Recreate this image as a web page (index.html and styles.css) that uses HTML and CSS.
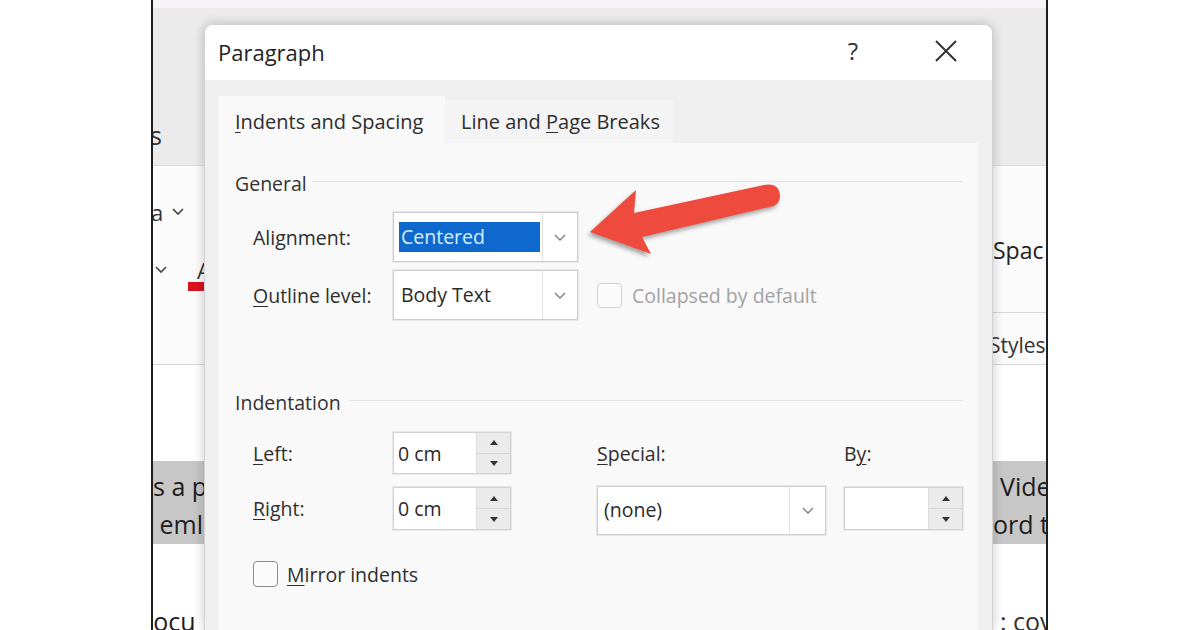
FILE: index.html
```html
<!DOCTYPE html>
<html lang="en">
<head>
<meta charset="utf-8">
<title>Paragraph</title>
<link rel="stylesheet" href="styles.css">
</head>
<body>
<div class="screen">
  <div class="top-strip"></div>
  <div class="ribbon-tabs"><span class="frag frag-s">s</span></div>
  <div class="ribbon">
    <div class="rib-left">
      <div class="rib-row rib-row1"><span class="frag">a</span><svg class="mini-chev" width="12" height="8" viewBox="0 0 12 8"><polyline points="1,1 6,6 11,1"/></svg></div>
      <div class="rib-row rib-row2"><svg class="mini-chev" width="12" height="8" viewBox="0 0 12 8"><polyline points="1,1 6,6 11,1"/></svg><span class="font-color"><span class="font-a">A</span><span class="red-bar"></span></span></div>
    </div>
    <div class="rib-right">
      <div class="rib-block1"><span class="frag frag-spac">Spac</span></div>
      <div class="rib-block2"><span class="frag frag-styles">Styles</span></div>
    </div>
  </div>
  <div class="doc">
    <div class="doc-band">
      <div class="doc-line"><span class="frag">s a p</span><span class="frag">Vide</span></div>
      <div class="doc-line"><span class="frag">&nbsp;eml</span><span class="frag frag-ord">ord t</span></div>
    </div>
    <div class="doc-line doc-last"><span class="frag frag-locu">locu</span><span class="frag frag-cov">: cov</span></div>
  </div>
</div>

<div class="dialog">
  <div class="titlebar">
    <span class="title">Paragraph</span>
    <span class="help">?</span>
    <span class="close"><svg width="24" height="24" viewBox="0 0 24 24"><path d="M2 2 L22 22 M22 2 L2 22"/></svg></span>
  </div>
  <div class="dlg-body">
    <div class="tabs">
      <div class="tab tab-active"><u>I</u>ndents and Spacing</div>
      <div class="tab tab-inactive">Line and <u>P</u>age Breaks</div>
    </div>
    <div class="panel">
      <div class="group-head"><span>General</span><span class="rule"></span></div>
      <div class="rows">
        <div class="row">
          <span class="label">Ali<u>g</u>nment:</span>
          <div class="combo">
            <div class="combo-value"><span class="selected">Centered</span></div>
            <div class="combo-btn"><svg width="12" height="7" viewBox="0 0 12 7"><polyline points="1,1 6,6 11,1"/></svg></div>
          </div>
        </div>
        <div class="row row-gap">
          <span class="label"><u>O</u>utline level:</span>
          <div class="combo">
            <div class="combo-value plain">Body Text</div>
            <div class="combo-btn"><svg width="12" height="7" viewBox="0 0 12 7"><polyline points="1,1 6,6 11,1"/></svg></div>
          </div>
          <span class="check check-disabled"></span>
          <span class="check-label disabled">Collapsed by default</span>
        </div>
      </div>

      <div class="group-head group-indent"><span>Indentation</span><span class="rule"></span></div>
      <div class="indent-grid">
        <span class="label c1"><u>L</u>eft:</span>
        <div class="spin c2">
          <div class="spin-value">0 cm</div>
          <div class="spin-btns"><span class="up"></span><span class="down"></span></div>
        </div>
        <span class="label c4"><u>S</u>pecial:</span>
        <span class="label c6">B<u>y</u>:</span>

        <span class="label c1"><u>R</u>ight:</span>
        <div class="spin c2">
          <div class="spin-value">0 cm</div>
          <div class="spin-btns"><span class="up"></span><span class="down"></span></div>
        </div>
        <div class="combo combo-special c4">
          <div class="combo-value plain">(none)</div>
          <div class="combo-btn"><svg width="12" height="7" viewBox="0 0 12 7"><polyline points="1,1 6,6 11,1"/></svg></div>
        </div>
        <div class="spin c6">
          <div class="spin-value"></div>
          <div class="spin-btns"><span class="up"></span><span class="down"></span></div>
        </div>
      </div>

      <div class="mirror-row">
        <span class="check"></span>
        <span class="check-label"><u>M</u>irror indents</span>
      </div>
    </div>
  </div>
</div>

<svg class="arrow" width="230" height="100" viewBox="570 170 230 100">
  <path d="M590 232 L636 190 L634 213 L764 185 Q779 182 780 195 Q780 206 769 207 L642 237 L651 254 Z"/>
</svg>
</body>
</html>
```
FILE: styles.css
```css
html, body {
  margin: 0;
  padding: 0;
}
body {
  width: 1200px;
  height: 630px;
  overflow: hidden;
  background: #ffffff;
  font-family: "Open Sans", "Noto Sans", sans-serif;
  color: #2e2e2e;
  position: relative;
}

/* ---------- background Word window ---------- */
.screen {
  margin-left: 151px;
  width: 893px;
  height: 630px;
  border-left: 2px solid #1f1f1f;
  border-right: 2px solid #1f1f1f;
  overflow: hidden;
  background: #ffffff;
}
.top-strip {
  height: 8px;
  background: #f6f4f8;
}
.ribbon-tabs {
  height: 157px;
  background: #ebebeb;
  box-sizing: border-box;
  padding-top: 108px;
  font-size: 25px;
  line-height: 38px;
  color: #333;
}
.frag {
  white-space: nowrap;
}
.frag-s {
  margin-left: -3px;
}
.ribbon {
  height: 200px;
  box-sizing: border-box;
  border-top: 1px solid #dcdcdc;
  border-bottom: 1px solid #d6d6d6;
  background: #fbfbfb;
  display: flex;
  justify-content: space-between;
}
.rib-left {
  width: 51px;
  padding-top: 31px;
}
.rib-row {
  height: 30px;
  display: flex;
  align-items: center;
  font-size: 22px;
  color: #333;
}
.rib-row1 .frag {
  margin-left: -2px;
}
.rib-row1 .mini-chev {
  margin-left: 9px;
}
.rib-row2 {
  margin-top: 28px;
}
.rib-row2 .mini-chev {
  margin-left: 2px;
}
.mini-chev {
  flex: none;
}
.mini-chev polyline {
  fill: none;
  stroke: #444;
  stroke-width: 1.6;
}
.font-color {
  flex: none;
  display: flex;
  flex-direction: column;
  margin-left: 21px;
  margin-top: 10px;
}
.font-a {
  font-size: 22px;
  line-height: 22px;
  color: #333;
  margin-left: 9px;
}
.red-bar {
  width: 17px;
  height: 9px;
  background: #d9121e;
  margin-top: 1px;
}
.rib-right {
  width: 53px;
  display: flex;
  flex-direction: column;
}
.rib-block1 {
  height: 147px;
  box-sizing: border-box;
  padding-top: 69px;
  border-bottom: 1px solid #d8d8d8;
  font-size: 23px;
  line-height: 30px;
  color: #222;
}
.rib-block2 {
  padding-top: 17px;
  font-size: 21px;
  line-height: 30px;
  color: #333;
}
.frag-styles {
  margin-left: -4px;
}
.doc {
  padding-top: 96px;
  font-size: 25px;
  color: #1d1d1d;
}
.doc-band {
  background: #c7c7c7;
  padding: 6px 0 1px;
}
.doc-line {
  height: 38px;
  line-height: 38px;
  display: flex;
  justify-content: space-between;
}
.doc-line .frag:last-child {
  width: 46px;
  overflow: hidden;
}
.doc-band .doc-line:nth-child(2) .frag:last-child {
  width: 53px;
}
.doc-last {
  margin-top: 58px;
}
.frag-locu {
  margin-left: -6px;
}
.doc-last .frag-cov {
  width: 46px;
  color: #333;
}

/* ---------- dialog ---------- */
.dialog {
  position: absolute;
  left: 204px;
  top: 24px;
  width: 789px;
  height: 606px;
  box-sizing: border-box;
  background: #efefef;
  border: 1px solid #d2d2d2;
  border-bottom: none;
  border-radius: 9px 9px 0 0;
  box-shadow: 0 0 12px rgba(0, 0, 0, 0.22);
  overflow: hidden;
}
.titlebar {
  height: 55px;
  background: #ffffff;
  display: flex;
  align-items: center;
  padding-left: 13px;
}
.title {
  font-size: 22px;
  color: #242424;
  margin-top: -2px;
}
.help {
  margin-left: auto;
  width: 40px;
  text-align: center;
  font-size: 24px;
  color: #333;
  margin-top: -4px;
}
.close {
  width: 48px;
  height: 48px;
  margin-left: 49px;
  margin-right: 22px;
  display: flex;
  align-items: center;
  justify-content: center;
  margin-top: -4px;
}
.close path {
  stroke: #333;
  stroke-width: 2;
  fill: none;
}
.dlg-body {
  padding: 16px 14px 0 13px;
}
.tabs {
  display: flex;
  align-items: flex-end;
  height: 47px;
}
.tab {
  box-sizing: border-box;
  font-size: 20px;
  line-height: 30px;
  white-space: nowrap;
  color: #2e2e2e;
}
.tab-active {
  width: 227px;
  height: 47px;
  padding: 11px 0 0 17px;
  background: #f9f9f9;
}
.tab-inactive {
  width: 228px;
  height: 43px;
  padding: 7px 0 0 16px;
  background: #f4f4f4;
}
u {
  text-decoration: underline;
  text-decoration-thickness: 1px;
  text-underline-offset: 3px;
}
.panel {
  width: 760px;
  height: 488px;
  box-sizing: border-box;
  background: #f9f9f9;
  padding: 25px 15px 0 17px;
}
.group-head {
  height: 30px;
  display: flex;
  align-items: center;
  font-size: 19.5px;
  color: #333;
}
.group-head .rule {
  flex: 1;
  height: 1px;
  background: #e3e3e3;
  margin-left: 5px;
  margin-top: -3px;
}
.group-indent .rule {
  margin-left: 8px;
}
.rows {
  padding-left: 18px;
  margin-top: 14px;
}
.row {
  display: flex;
  align-items: center;
  height: 50px;
}
.row-gap {
  margin-top: 8px;
}
.label {
  font-size: 19.5px;
  color: #2e2e2e;
  white-space: nowrap;
}
.row .label {
  width: 140px;
}
.combo {
  width: 185px;
  height: 50px;
  box-sizing: border-box;
  border: 1px solid #cdcdcd;
  box-shadow: 0 0 0 1px #e8e8e8;
  background: #ffffff;
  display: flex;
}
.combo-value {
  flex: 1;
  padding: 9px 2px 9px 5px;
  font-size: 19.5px;
  line-height: 30px;
  color: #2a2a2a;
}
.combo-value.plain {
  padding-left: 7px;
}
.selected {
  display: block;
  height: 30px;
  padding-left: 2px;
  background: #0f68cd;
  color: #d8ecff;
}
.combo-btn {
  width: 34px;
  border-left: 1px solid #e3e3e3;
  display: flex;
  align-items: center;
  justify-content: center;
}
.combo-btn polyline {
  fill: none;
  stroke: #7a7a7a;
  stroke-width: 1.3;
}
.check {
  width: 25px;
  height: 25px;
  box-sizing: border-box;
  border: 1.5px solid #8c8c8c;
  border-radius: 4px;
  background: #fbfbfb;
  flex: none;
}
.check-disabled {
  margin-left: 19px;
  border-color: #d0d0d0;
}
.check-label {
  font-size: 19.5px;
  color: #2e2e2e;
  margin-left: 10px;
  white-space: nowrap;
}
.check-label.disabled {
  color: #a2a2a2;
}
.group-indent {
  margin-top: 67px;
}
.indent-grid {
  margin-top: 15px;
  padding-left: 18px;
  display: grid;
  grid-template-columns: 140px 118px 86px 229px 18px 119px;
  grid-template-rows: 42px 43px;
  row-gap: 13px;
  align-items: center;
}
.c1 { grid-column: 1; }
.c2 { grid-column: 2; }
.c4 { grid-column: 4; }
.c6 { grid-column: 6; }
.spin {
  height: 100%;
  box-sizing: border-box;
  border: 1px solid #d2d2d2;
  box-shadow: 0 0 0 1px #e8e8e8;
  background: #ffffff;
  display: flex;
}
.spin-value {
  flex: 1;
  padding-left: 4px;
  font-size: 19.5px;
  display: flex;
  align-items: center;
  color: #2a2a2a;
}
.spin-btns {
  width: 33px;
  background: #ebebeb;
  border-left: 1px solid #dedede;
  display: flex;
  flex-direction: column;
}
.spin-btns span {
  flex: 1;
  display: flex;
  align-items: center;
  justify-content: center;
}
.spin-btns .up {
  border-bottom: 1px solid #d4d4d4;
}
.spin-btns .up::before {
  content: "";
  border-left: 4px solid transparent;
  border-right: 4px solid transparent;
  border-bottom: 5px solid #333;
}
.spin-btns .down::before {
  content: "";
  border-left: 4px solid transparent;
  border-right: 4px solid transparent;
  border-top: 5px solid #333;
}
.combo-special {
  width: 229px;
  height: 49px;
  align-self: start;
  margin-top: -1px;
}
.combo-special .combo-value {
  padding-top: 8px;
  padding-left: 6px;
}
.combo-special .combo-btn {
  width: 35px;
}
.mirror-row {
  margin-top: 31px;
  padding-left: 18px;
  display: flex;
  align-items: center;
  height: 26px;
}
.mirror-row .check {
  height: 26px;
}
.mirror-row .check-label {
  margin-left: 9px;
}

/* ---------- annotation arrow ---------- */
.arrow {
  position: absolute;
  left: 570px;
  top: 170px;
  filter: drop-shadow(-2px 3px 2px rgba(0, 0, 0, 0.35));
}
.arrow path {
  fill: #ee4a3e;
}
```
